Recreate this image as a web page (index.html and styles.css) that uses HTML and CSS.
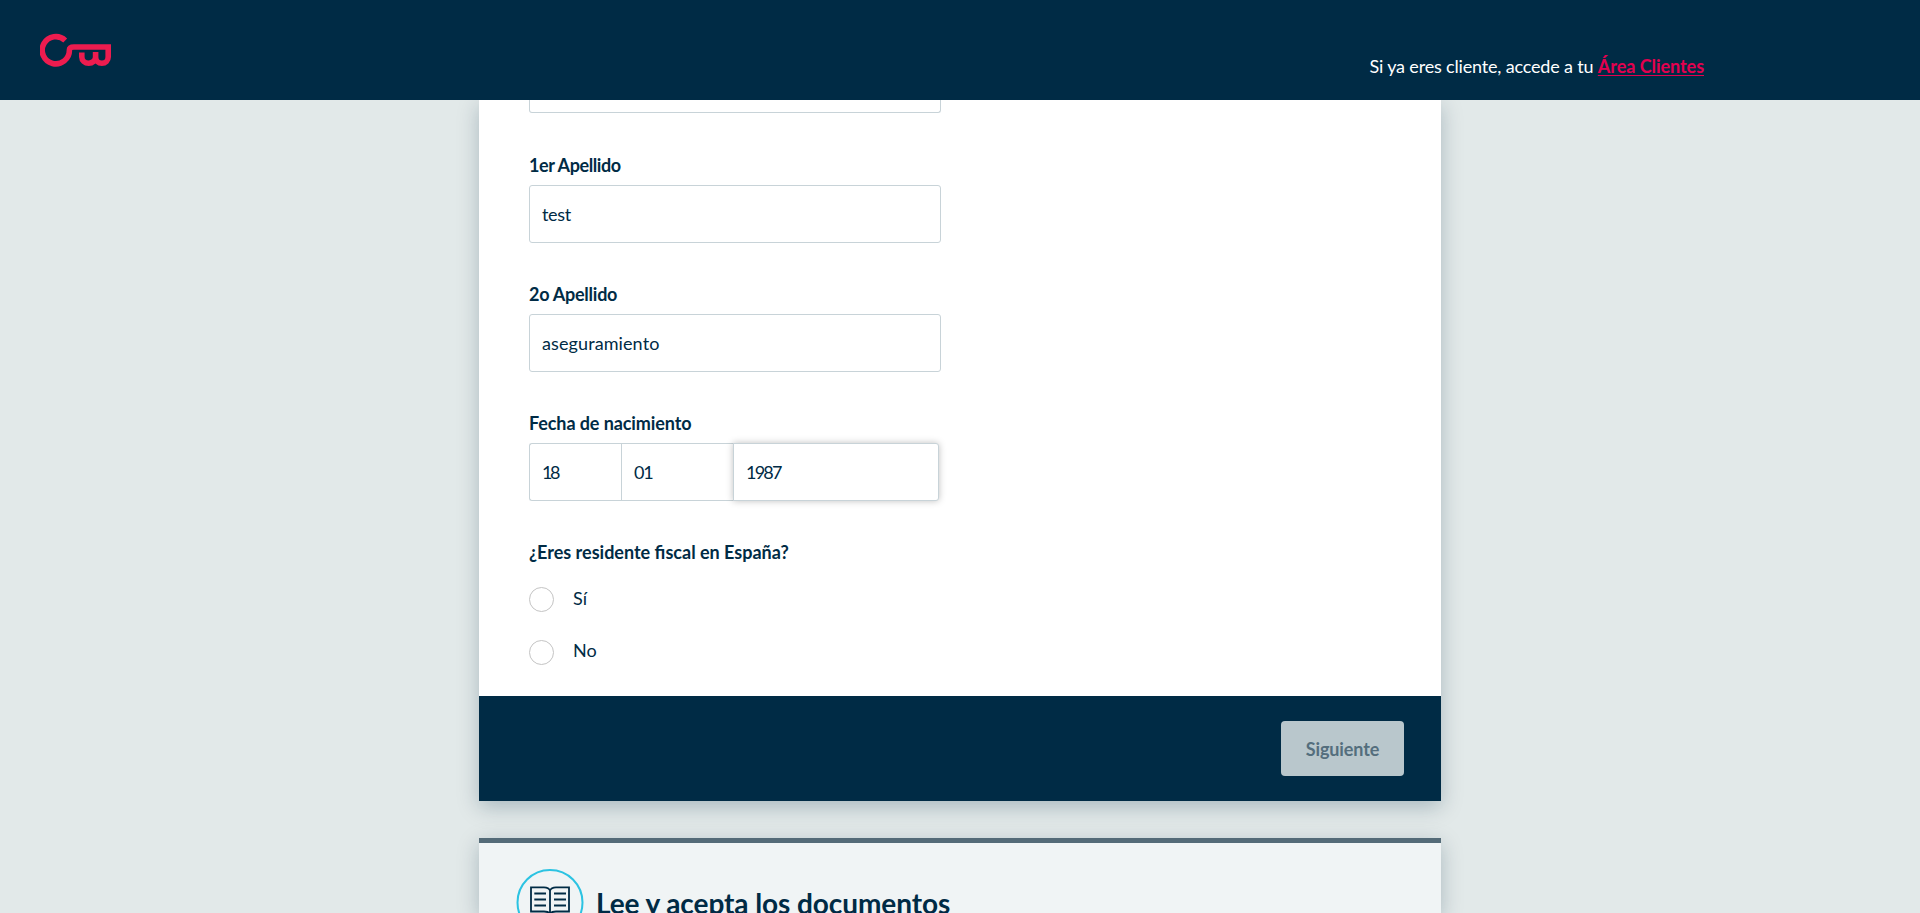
FILE: index.html
```
<!DOCTYPE html>
<html lang="es">
<head>
<meta charset="utf-8">
<title>Alta de cliente</title>
<link rel="stylesheet" href="styles.css">
</head>
<body>
<header class="topbar">
  <svg class="logo" viewBox="0 0 72 34" fill="none" stroke="#ed1c4f" stroke-width="5.6" stroke-linejoin="miter">
    <path d="M25.2 7.4A13.6 13.6 0 1 0 29.4 17C29.4 14.5 31 14 34 14H68.2V24a6.2 6.2 0 0 1-12.6 0V19M55.600 24a6.900 6.200 0 0 1-13.800 0V19.500"/>
  </svg>
  <p class="access"><span class="access-text">Si ya eres cliente, accede a tu </span><a class="access-link" href="#">Área Clientes</a></p>
</header>
<main class="page">
  <section class="card">
    <form class="form">
      <div class="box first-box"></div>
      <div class="field">
        <label class="label tight">1er Apellido</label>
        <div class="box"><span class="v-test">test</span></div>
      </div>
      <div class="field">
        <label class="label semi">2o Apellido</label>
        <div class="box"><span class="v-long">aseguramiento</span></div>
      </div>
      <div class="field">
        <label class="label birth">Fecha de nacimiento</label>
        <div class="date">
          <div class="box day"><span class="v-day">18</span></div>
          <div class="box month"><span class="v-month">01</span></div>
          <div class="box year"><span class="v-year">1987</span></div>
        </div>
      </div>
      <div class="field">
        <div class="label question">¿Eres residente fiscal en España?</div>
        <div class="option"><span class="radio"></span><span class="option-text">Sí</span></div>
        <div class="option"><span class="radio"></span><span class="option-text">No</span></div>
      </div>
    </form>
    <footer class="card-footer"><button class="next" type="button" disabled>Siguiente</button></footer>
  </section>
  <section class="card docs">
    <svg class="book" viewBox="0 0 68 68" fill="none">
      <circle cx="34" cy="34.500" r="32.500" stroke="#2cc3e2" stroke-width="2"/>
      <g stroke="#002b45" stroke-width="1.8">
        <path d="M34 22.500C33 19.800 31 19.300 28 19.300H15V43.500H28C31 43.500 33 44 34 46.500C35 44 37 43.500 40 43.500H53V19.300H40C37 19.300 35 19.800 34 22.500V46.500"/>
        <path d="M18.300 25.500H30M18.300 31.500H30M18.300 37.500H30M38 25.500H50M38 31.500H50M38 37.500H50"/>
      </g>
    </svg>
    <h2 class="docs-title">Lee y acepta los documentos</h2>
  </section>
</main>
</body>
</html>
```

FILE: styles.css
```
* { box-sizing: border-box; }
body {
  margin: 0;
  height: 913px;
  overflow: hidden;
  background: #e2e9e9;
  color: #002b45;
  font: 400 18px/24px Lato, "Open Sans", sans-serif;
}
.topbar {
  position: relative;
  z-index: 2;
  height: 100px;
  padding: 0 216px 0 40px;
  display: flex;
  justify-content: space-between;
  background: #002b45;
}
.logo { width: 72px; height: 34px; margin-top: 33.4px; }
.access { margin: 54px 0 0; color: #fff; white-space: pre; }
.access-text { letter-spacing: -0.17px; }
.access-link {
  color: #e4004f;
  font-weight: 700;
  letter-spacing: -0.05px;
  text-decoration: underline;
  text-decoration-thickness: 1px;
  text-underline-offset: 2px;
}
.page { width: 962px; margin: 0 auto; }
.card { background: #fff; box-shadow: 0 6px 20px rgba(0, 43, 69, 0.25); }
.form { height: 596px; padding-left: 50px; }
.box {
  width: 412px;
  height: 58px;
  padding: 16px 12px 0;
  border: 1px solid #c8d3d8;
  border-radius: 3px;
  background: #fff;
}
.first-box { height: 13px; padding: 0; border-top: 0; border-radius: 0 0 3px 3px; }
.field { height: 129px; padding-top: 40px; }
.label { display: block; height: 32px; font-weight: 700; }
.tight { letter-spacing: -0.4px; }
.semi { letter-spacing: -0.25px; }
.birth { letter-spacing: -0.1px; }
.question { height: 38px; }
.v-test { letter-spacing: -0.3px; }
.v-long { letter-spacing: 0.1px; }
.v-day { letter-spacing: -2.5px; }
.v-month { letter-spacing: -1.3px; }
.v-year { letter-spacing: -1.8px; }
.date { display: flex; }
.day { width: 92px; border-right: 0; border-radius: 3px 0 0 3px; }
.month { width: 113px; border-right: 0; border-radius: 0; }
.year {
  width: 206px;
  margin-left: -1px;
  border-radius: 0 3px 3px 0;
  box-shadow: 0 0 7px rgba(0, 0, 0, 0.25);
}
.option { display: flex; height: 53px; padding-top: 9px; gap: 19px; }
.radio { width: 25px; height: 25px; border: 1px solid #c4c4c4; border-radius: 50%; }
.option-text { margin-top: -1px; }
.option + .option .option-text { margin-top: -2px; }
.card-footer {
  height: 105px;
  padding: 25px 37px;
  display: flex;
  justify-content: flex-end;
  background: #002b45;
}
.next {
  width: 123px;
  height: 55px;
  padding: 0;
  border: 0;
  border-radius: 4px;
  background: #b9c7cc;
  color: #546e7d;
  font: 700 18px/24px Lato, "Open Sans", sans-serif;
  letter-spacing: -0.1px;
}
.docs {
  height: 75px;
  margin-top: 37px;
  padding: 25px 37px 0;
  display: flex;
  gap: 12px;
  border-top: 5px solid #546b78;
  background: #f0f4f5;
}
.book { width: 68px; height: 68px; flex: none; }
.docs-title { margin: 17px 0 0; font-size: 28px; line-height: 36px; letter-spacing: -0.08px; }
```
